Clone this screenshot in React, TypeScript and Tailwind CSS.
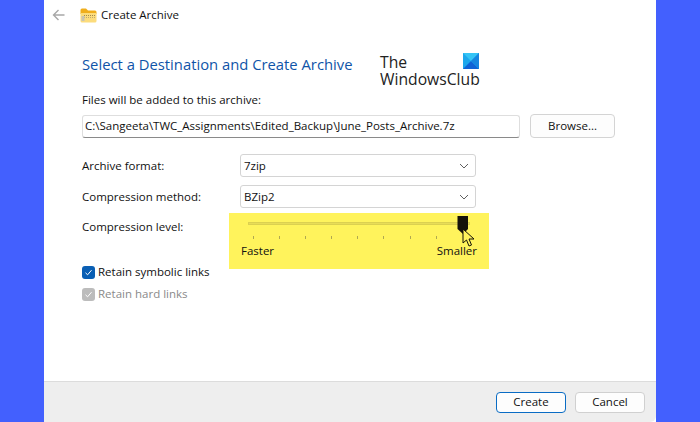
const font = "font-['Open_Sans',sans-serif]";

function FolderIcon() {
  return (
    <svg width="17" height="15" viewBox="0 0 17 15" className="mr-[4px] shrink-0">
      <path d="M0.5 2 Q0.5 0.5 2 0.5 H6 L8 2.5 H15 Q16.5 2.5 16.5 4 V6 H0.5 Z" fill="#f0ae1c" />
      <path d="M0.5 5 H16.5 V13 Q16.5 14.5 15 14.5 H2 Q0.5 14.5 0.5 13 Z" fill="#fcdc7c" />
      <path d="M4 7.5 H16" stroke="#a08a50" strokeWidth="1" strokeDasharray="1 1" />
      <path d="M4 9.5 H16" stroke="#c0ac70" strokeWidth="1" strokeDasharray="1 1" />
      <rect x="1.5" y="8" width="3" height="5" fill="#c9c4b0" />
    </svg>
  );
}

function WindowsLogo() {
  return (
    <svg width="16" height="16" viewBox="0 0 16 16" className="absolute right-0 top-[-1px]">
      <rect width="16" height="16" fill="#1ca7ec" />
      <path d="M0 0 L8 8 L16 0 Z" fill="#35c4f5" />
      <path d="M0 16 L8 8 L16 16 Z" fill="#0f62d6" />
      <path d="M8 8 L16 0 V16 Z" fill="#1585e0" />
    </svg>
  );
}

function Chevron() {
  return (
    <svg width="10" height="6" viewBox="0 0 10 6" fill="none" stroke="#606060" strokeWidth="1">
      <path d="M1 1 L5 5 L9 1" />
    </svg>
  );
}

function SelectRow({ label, value }: { label: string; value: string }) {
  return (
    <div className="flex items-center">
      <div className="w-[158px] text-[11.5px] text-[#111]">{label}</div>
      <div className="flex h-[23px] w-[236px] items-center justify-between rounded-[3px] border border-[#d4d4d4] bg-white pl-[3px] pr-[6px] text-[11.5px] text-[#111]">
        <span>{value}</span>
        <Chevron />
      </div>
    </div>
  );
}

function Check({ label, disabled }: { label: string; disabled?: boolean }) {
  return (
    <div className={`flex items-center gap-[3px] text-[11.5px] ${disabled ? "text-[#8a8a8a]" : "text-[#111]"}`}>
      <div className={`flex h-[13px] w-[13px] items-center justify-center rounded-[3px] ${disabled ? "bg-[#bcbcbc]" : "bg-[#0a5fb4]"}`}>
        <svg width="9" height="9" viewBox="0 0 9 9" fill="none" stroke="white" strokeWidth="1">
          <path d="M1.5 4.8 L3.6 6.8 L7.5 2.2" />
        </svg>
      </div>
      <span>{label}</span>
    </div>
  );
}

const ticks = [0, 1, 2, 3, 4, 5, 6, 7];

function Slider() {
  return (
    <div className="relative h-[56px] w-[260px] bg-[#fff35c] px-[12px]">
      <div className="mx-[7px] mt-[9px] h-[3px] border border-[#dcd050] bg-[#e8dc58]" />
      <div className="ml-[12px] mt-[11px] flex gap-[25.1px]">
        {ticks.map((t) => (
          <div key={t} className="h-[3px] w-px bg-[#b0a850]" />
        ))}
      </div>
      <div className="mt-[3px] flex justify-between text-[11.5px] text-[#111]">
        <span>Faster</span>
        <span>Smaller</span>
      </div>
      <svg width="12" height="18" viewBox="0 0 12 18" className="absolute left-[228px] top-[3px]">
        <path d="M0.5 0 H11 V13 L6 18 L0.5 13 Z" fill="#15120a" />
      </svg>
      <svg width="13" height="19" viewBox="0 0 13 19" className="absolute left-[233px] top-[15px]">
        <path d="M1 1 V15 L4.5 12 L7 18 L9.5 17 L7 11 L12 11 Z" fill="#fff35c" stroke="#15120a" strokeWidth="1" />
      </svg>
    </div>
  );
}

export default function App() {
  return (
    <div className={`flex h-[422px] w-[700px] justify-center overflow-hidden bg-[#4360fe] ${font}`}>
      <div className="flex h-full w-[612px] flex-col bg-white">
        <div className="flex h-[30px] items-center pl-[8px] text-[11.5px] text-[#111]">
          <svg width="13" height="12" viewBox="0 0 13 12" fill="none" stroke="#a8a8a8" strokeWidth="1.4" className="mr-[15px]">
            <path d="M12.5 6 H1.5 M6.5 1 L1.5 6 L6.5 11" />
          </svg>
          <FolderIcon />
          <span>Create Archive</span>
        </div>
        <div className="flex-1 pl-[38px]">
          <div className="flex h-[58px] items-start">
            <h1 className="mt-[24px] w-[298px] text-[14.8px] font-normal leading-[20px] text-[#0f54a8]">
              Select a Destination and Create Archive
            </h1>
            <div className="relative mt-[24px] w-[99px] text-[15.7px] leading-[17px] text-[#222]">
              <WindowsLogo />
              <div>The</div>
              <div>WindowsClub</div>
            </div>
          </div>
          <div className="mt-[4px] text-[11.5px] leading-[16px] text-[#111]">Files will be added to this archive:</div>
          <div className="mt-[6px] flex items-center gap-[10px]">
            <div className="flex h-[23px] w-[438px] items-center rounded-[3px] border border-[#dedede] border-b-[#8a8a8a] pl-[2px] text-[11.5px] text-[#111]">
              C:\Sangeeta\TWC_Assignments\Edited_Backup\June_Posts_Archive.7z
            </div>
            <div className="flex h-[24px] w-[85px] items-center justify-center rounded-[4px] border border-[#d4d4d4] bg-[#fdfdfd] text-[11.5px] text-[#111]">
              Browse...
            </div>
          </div>
          <div className="mt-[16px] flex flex-col gap-[8px]">
            <SelectRow label="Archive format:" value="7zip" />
            <SelectRow label="Compression method:" value="BZip2" />
          </div>
          <div className="mt-[5px] flex">
            <div className="mt-[6px] w-[147px] text-[11.5px] leading-[16px] text-[#111]">Compression level:</div>
            <Slider />
          </div>
          <div className="mt-[-5px] flex flex-col gap-[6px] leading-[16px]">
            <Check label="Retain symbolic links" />
            <Check label="Retain hard links" disabled />
          </div>
        </div>
        <div className="flex h-[41px] items-center justify-end gap-[9px] rounded-br-[6px] border-t border-[#dcdcdc] bg-[#eeeeee] pr-[11px] text-[11.5px] text-[#111]">
          <div className="flex h-[21px] w-[70px] items-center justify-center rounded-[4px] border border-[#0a6cc4] bg-[#fdfdfd]">Create</div>
          <div className="flex h-[21px] w-[70px] items-center justify-center rounded-[4px] border border-[#d0d0d0] bg-[#fdfdfd]">Cancel</div>
        </div>
      </div>
    </div>
  );
}
